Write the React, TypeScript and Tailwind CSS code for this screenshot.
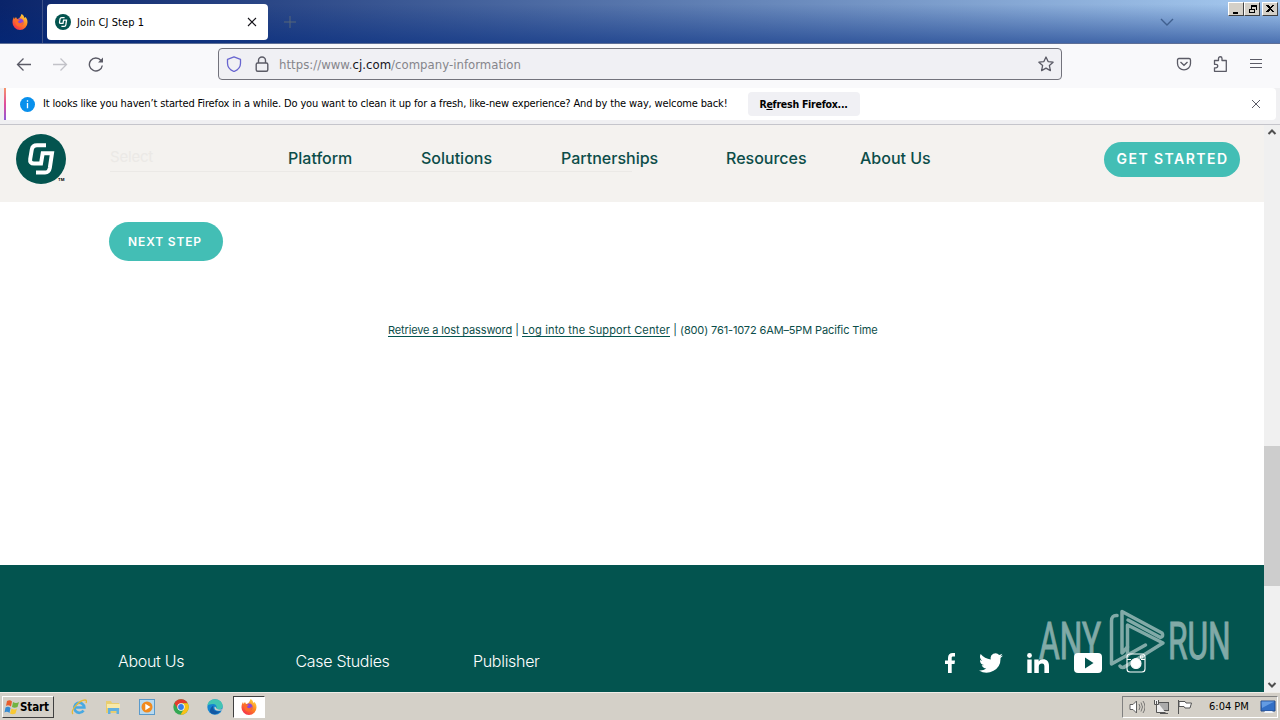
import { ReactNode } from 'react'
import clsx from 'clsx'

const navItems = [
  { label: 'Platform', width: 'w-[133px]' },
  { label: 'Solutions', width: 'w-[140px]' },
  { label: 'Partnerships', width: 'w-[165px]' },
  { label: 'Resources', width: 'w-[134px]' },
  { label: 'About Us', width: 'w-[80px]' },
]

const footerLinks = ['About Us', 'Case Studies', 'Publisher']

function CjLogo({ className }: { className?: string }) {
  return (
    <svg viewBox="0 0 50 50" className={className}>
      <circle cx="25" cy="25" r="25" fill="#03544f" />
      <path
        d="M30 11.200H21Q16.500 11.200 15.800 15.500L14.200 25Q13.500 29.500 18 29.500H25L26.700 19.300H36L33.800 34Q33 38.500 29 38.500H20"
        fill="none"
        stroke="#fff"
        strokeWidth="4"
      />
    </svg>
  )
}

function FirefoxIcon({ className }: { className?: string }) {
  return (
    <svg viewBox="0 0 16 16" className={className}>
      <defs>
        <linearGradient id="fox" x1="0.9" y1="0" x2="0.2" y2="1">
          <stop offset="0" stopColor="#ffe14a" />
          <stop offset="0.45" stopColor="#ff8a1f" />
          <stop offset="1" stopColor="#f5284f" />
        </linearGradient>
      </defs>
      <path d="M2 3l.5 2L4 3l1 2 2-.5C8 3 9 2 9.500 0c2 1 2.500 2.500 3 4l1-1c1.500 1.500 2 3 2 5.500A7.500 7.500 0 0 1 .5 8.500C.5 6 1 5 2 3z" fill="url(#fox)" />
      <circle cx="8" cy="8" r="3.500" fill="#8b45d8" />
      <path d="M3 6c2-1.500 3.500-.5 5 0L6 7.500c.5 2.500 3.500 2 5 0 .5 3-1.500 5-4 5S3 9 3 6z" fill="#ff6a2a" />
    </svg>
  )
}

function TitleBar() {
  return (
    <div className="relative flex h-11 items-start border-b border-[#5e6f96] bg-[linear-gradient(to_right,#0a246a,#a6caf0)]">
      <div className="pointer-events-none absolute inset-0 bg-[linear-gradient(to_bottom,transparent_10%,rgba(0,40,125,0.55))]" />
      <div className="relative flex h-[43px] w-[43px] items-center justify-center border-r border-[#3e5288] pr-[2px]">
        <FirefoxIcon className="size-4" />
      </div>
      <div className="relative mt-1 ml-1 flex h-9 w-[221px] items-center rounded bg-white pl-2 pr-[10px]">
        <CjLogo className="size-4" />
        <span className="ml-[6px] pt-[2px] text-[11px] tracking-[0.08px]">Join CJ Step 1</span>
        <svg viewBox="0 0 12 12" className="ml-auto size-3" stroke="#15141a" strokeWidth="1.1">
          <path d="M2 2l8 8M10 2l-8 8" />
        </svg>
      </div>
      <svg viewBox="0 0 12 12" className="relative mt-4 ml-4 size-3" stroke="#566678">
        <path d="M6 0v12M0 6h12" />
      </svg>
      <svg viewBox="0 0 14 10" className="relative mt-[17px] ml-auto h-[10px] w-[14px]" fill="none" stroke="#40608f" strokeWidth="1.400">
        <path d="M1 2l6 6 6-6" />
      </svg>
      <div className="relative mt-[2px] mr-[2px] ml-[54px] flex">
        {['M4 9h5v2H4z', 'M6 2h6v5h-2v3H4V6h2zM7 4v2h3v1h1V4zM5 7v2h4V7z', 'M3 2h2l2 2 2-2h2L8 5.500 11 9H9L7 7l-2 2H3l3-3.500z'].map((d, i) => (
          <div
            key={d}
            className={clsx(
              'h-[14px] w-4 border border-t-white border-r-[#404040] border-b-[#404040] border-l-white bg-[#d4d0c8]',
              i === 2 && 'ml-[2px]',
            )}
          >
            <svg viewBox="0 0 14 12" className="h-3 w-[14px]" shapeRendering="crispEdges">
              <path d={d} fillRule="evenodd" />
            </svg>
          </div>
        ))}
      </div>
    </div>
  )
}

function Toolbar() {
  return (
    <div className="flex h-11 items-start bg-[#f9f9fb] pt-1 pl-4">
      <div className="flex h-8 w-[202px] items-center gap-5">
        <svg viewBox="0 0 16 16" className="size-4" fill="none" stroke="#5b5b66" strokeWidth="1.300">
          <path d="M15 8.500H1.500M7.500 2.500l-6 6 6 6" />
        </svg>
        <svg viewBox="0 0 16 16" className="size-4" fill="none" stroke="#c2c2c8" strokeWidth="1.300">
          <path d="M1 8.500h13.500M8.500 2.500l6 6-6 6" />
        </svg>
        <svg viewBox="0 0 16 16" className="size-4" fill="none" stroke="#5b5b66" strokeWidth="1.400">
          <path d="M14.300 9.500A6.500 6.500 0 1 1 13 4.500" />
          <path d="M15 1.500v5h-5z" fill="#5b5b66" stroke="none" />
        </svg>
      </div>
      <div className="flex h-8 w-[844px] items-center rounded border border-[#73737c] bg-[#f0f0f4] px-[7px]">
        <svg viewBox="0 0 16 16" className="size-4" fill="none" stroke="#6865d0" strokeWidth="1.300">
          <path d="M8 .8l6.500 2.500v4C14.500 11 12 14 8 15.500 4 14 1.500 11 1.500 7.300v-4z" strokeLinejoin="round" />
        </svg>
        <svg viewBox="0 0 16 16" className="ml-3 size-4" fill="none" stroke="#5b5b66" strokeWidth="1.400">
          <rect x="2.200" y="7" width="11.600" height="8.200" rx="1.500" />
          <path d="M4.500 7V4.500a3.500 3.500 0 0 1 7 0V7" />
        </svg>
        <span className="ml-[9px] pt-[2px] text-[13px] tracking-[0.03px] text-[#85858b]">
          https://www.<span className="text-[#15141a]">cj.com</span>/company-information
        </span>
        <svg viewBox="0 0 16 16" className="ml-auto size-4" fill="none" stroke="#5b5b66" strokeWidth="1.300" strokeLinejoin="round">
          <path d="M8 1l2.100 4.600 5 .6-3.700 3.400 1 5L8 12.100l-4.400 2.500 1-5L.9 6.200l5-.6z" />
        </svg>
      </div>
      <div className="ml-[114px] flex h-8 items-center gap-5">
        <svg viewBox="0 0 16 16" className="size-4" fill="none" stroke="#5b5b66" strokeWidth="1.300">
          <path d="M3 2.500h10q1.500 0 1.500 1.500v3.500a6.500 6.300 0 0 1-13 0V4q0-1.500 1.500-1.500z" />
          <path d="M4.500 6L8 9.300 11.500 6" />
        </svg>
        <svg viewBox="0 0 16 16" className="size-4" fill="none" stroke="#5b5b66" strokeWidth="1.300" strokeLinejoin="round">
          <path d="M2.500 4.500h4V2.500a1.700 1.700 0 0 1 3.500 0v2h4.300V15.300H2.500v-3.500h1.500a1.700 1.700 0 0 0 0-3.500H2.500z" />
        </svg>
        <svg viewBox="0 0 16 16" className="size-4" stroke="#5b5b66" strokeWidth="1.200">
          <path d="M2 3.500h12M2 7.500h12M2 11.500h12" />
        </svg>
      </div>
    </div>
  )
}

function Notification() {
  return (
    <div className="h-[37px] border-b border-[#c5c5cb] bg-[#f0f0f2] pr-1 pl-1">
      <div className="flex h-8 items-center rounded-sm bg-white pr-[14px]">
        <div className="h-8 w-[2px] bg-[linear-gradient(to_bottom,#f6956a,#e04c9b,#9059d8)]" />
        <svg viewBox="0 0 16 16" className="ml-[14px] size-[15px]">
          <circle cx="8" cy="8" r="8" fill="#0990ec" />
          <path d="M7.300 3.500h1.400V5H7.300zM7.300 6.500h1.400V12H7.300z" fill="#fff" />
        </svg>
        <span className="ml-2 w-[705px] whitespace-nowrap text-[11px] tracking-[-0.145px]">
          It looks like you haven’t started Firefox in a while. Do you want to clean it up for a fresh, like-new experience? And by the way, welcome back!
        </span>
        <button className="h-6 w-28 rounded bg-[#f0f0f4] pt-px pr-px text-[10.500px] font-bold tracking-[-0.25px] whitespace-nowrap">
          R<span className="underline">e</span>fresh Firefox...
        </button>
        <svg viewBox="0 0 12 12" className="ml-auto size-3" stroke="#5b5b66">
          <path d="M2 2l8 8M10 2l-8 8" />
        </svg>
      </div>
    </div>
  )
}

function Header() {
  return (
    <header className="relative flex h-[77px] items-start bg-[#f4f2ef] font-[Inter]">
      <div className="absolute top-[21px] left-[110px] w-[522px] border-b border-[#ebe9e6] pb-[3px] text-[15px] leading-[22px] tracking-[-0.2px] text-[#ebe9e6]">
        Select
      </div>
      <div className="relative mt-[9px] ml-4 w-[272px]">
        <CjLogo className="size-[50px]" />
        <span className="absolute top-[43px] left-[42px] text-[4px] leading-[6px] font-bold">TM</span>
      </div>
      <nav className="relative flex pt-[21px] text-base font-medium text-[#0c4d49]">
        {navItems.map(item => (
          <a key={item.label} className={clsx('whitespace-nowrap', item.width)}>{item.label}</a>
        ))}
      </nav>
      <button className="mt-[17px] mr-6 ml-auto h-[35px] w-[136px] rounded-full bg-[#43beb5] pb-[2px] pl-px text-[14px] font-semibold tracking-[1.450px] whitespace-nowrap text-white">
        GET STARTED
      </button>
    </header>
  )
}

function SocialIcons() {
  return (
    <div className="flex h-5 items-center text-white">
      <svg viewBox="0 0 10 20" className="h-5 w-[10px]" fill="currentColor">
        <path d="M3 20V11H0V7.500h3V5c0-3.300 1.800-5 4.800-5H10v3.500H8.200C7 3.500 6.700 4 6.700 5v2.500H10L9.500 11H6.700v9z" />
      </svg>
      <svg viewBox="0 2 24 20" className="ml-6 h-5 w-6" fill="currentColor">
        <path d="M24 4.600a10 10 0 0 1-2.800.8 5 5 0 0 0 2.100-2.700 10 10 0 0 1-3.100 1.200 4.900 4.900 0 0 0-8.400 4.500A14 14 0 0 1 1.700 3.100a4.900 4.900 0 0 0 1.500 6.600 5 5 0 0 1-2.200-.6 4.900 4.900 0 0 0 3.900 4.900 5 5 0 0 1-2.200.1 4.900 4.900 0 0 0 4.600 3.400A10 10 0 0 1 0 19.500 14 14 0 0 0 21.500 7a10 10 0 0 0 2.500-2.400z" />
      </svg>
      <svg viewBox="0 0 22 20" className="ml-6 h-5 w-[22px]" fill="currentColor">
        <circle cx="2.500" cy="2.500" r="2.400" />
        <path d="M.3 6.500h4.400V20H.3zM7.300 6.500h4.400v2c1-1.500 2.300-2.300 4.300-2.300 4 0 6 2.500 6 6.800v7h-4.600v-6.500c0-2-.6-3-2.400-3-2 0-3.200 1-3.200 3.200V20H7.300z" />
      </svg>
      <svg viewBox="0 0 28 20" className="ml-[25px] h-5 w-7">
        <rect width="28" height="20" rx="4" fill="#fff" />
        <path d="M11 4.500v11l8.500-5.500z" fill="#03544f" />
      </svg>
      <svg viewBox="0 0 20 20" className="ml-6 size-5" fill="none" stroke="#fff" strokeWidth="1.100">
        <rect x="1" y="1" width="18" height="18" rx="3" />
        <path d="M1 6.500h4M15 6.500h4" />
        <circle cx="10" cy="10.500" r="5" fill="#fff" />
        <rect x="14.500" y="3" width="2.500" height="2" />
      </svg>
    </div>
  )
}

function Watermark() {
  return (
    <svg viewBox="0 0 200 70" className="absolute right-[28px] bottom-[20px] h-[70px] w-[200px] opacity-50" fill="#fff">
      <g fontFamily="Roboto" fontSize="52" stroke="#fff" strokeWidth="1">
        <text transform="translate(3 57) scale(.61 1)">ANY</text>
        <text transform="translate(132 57) scale(.61 1)">RUN</text>
      </g>
      <g fill="none" stroke="#fff" strokeWidth="3.500" strokeLinejoin="round" strokeLinecap="round">
        <path d="M81 13.500Q75.500 13 75.500 19V62l34-19" />
        <path d="M91.500 45L86 51V9.500L126 31Q128 34 124.500 35.500L92 18" />
        <path d="M91.500 54V23L127 41 90 64Q86 67 84 64" />
      </g>
    </svg>
  )
}

function Page() {
  return (
    <div className="flex h-[567px]">
      <main className="relative flex w-[1264px] flex-col overflow-hidden bg-white font-[Inter]">
        <Header />
        <div className="flex h-[363px] flex-col items-start pt-[20px]">
          <button className="ml-[109px] h-[39px] w-[114px] rounded-full bg-[#43beb5] pr-[2px] text-[12px] font-semibold tracking-[0.85px] whitespace-nowrap text-white">
            NEXT STEP
          </button>
          <p className="mt-[61px] ml-[388px] flex text-[11px] leading-4 whitespace-nowrap text-[#0c4d49]">
            <a className="h-[15px] w-[124px] border-b border-[#03544f] tracking-[-0.14px]">Retrieve a lost password</a>
            <span className="w-[10px] text-center">|</span>
            <a className="h-[15px] w-[148px] border-b border-[#03544f] tracking-[0.14px]">Log into the Support Center</a>
            <span className="w-[10px] text-center">|</span>
            <span className="tracking-[-0.13px]">(800) 761-1072 6AM–5PM Pacific Time</span>
          </p>
        </div>
        <footer className="flex h-[127px] items-start bg-[#03544f] pt-[84px] pr-[118px] pl-[118px] text-white">
          {footerLinks.map(link => (
            <a key={link} className="w-[177.500px] text-base font-light tracking-[-0.3px] whitespace-nowrap">{link}</a>
          ))}
          <div className="mt-1 ml-auto">
            <SocialIcons />
          </div>
        </footer>
        <Watermark />
      </main>
      <div className="flex w-4 flex-col items-center bg-[#f0f0f0]">
        <svg viewBox="0 0 16 14" className="h-[14px] w-4" fill="none" stroke="#505050" strokeWidth="2">
          <path d="M4.500 9L8 5.500 11.500 9" />
        </svg>
        <div className="mt-[307px] h-[140px] w-4 bg-[#cdcdcd]" />
        <svg viewBox="0 0 16 14" className="mt-auto h-[14px] w-4" fill="none" stroke="#505050" strokeWidth="2">
          <path d="M4.500 5L8 8.500 11.500 5" />
        </svg>
      </div>
    </div>
  )
}

function TaskIcon({ active, children }: { active?: boolean; children: ReactNode }) {
  return (
    <div
      className={clsx(
        'mr-[2px] flex h-[22px] w-8 items-center justify-center',
        active && 'border border-t-[#404040] border-r-white border-b-white border-l-[#404040] bg-white',
      )}
    >
      {children}
    </div>
  )
}

function Taskbar() {
  return (
    <div className="flex h-7 items-start border-t border-[#efede8] bg-[#d4d0c8] pt-[3px] pr-[2px] pl-[2px]">
      <button className="mr-[9px] flex h-[22px] w-[52px] items-center border border-t-white border-r-[#404040] border-b-[#404040] border-l-white pl-px text-[11.500px] font-bold">
        <svg viewBox="0 0 16 16" className="size-4 shrink-0">
          <path d="M3 2q3-1.500 5 .5L7 7.500q-3-2-5-.5z" fill="#e85d2b" />
          <path d="M9 3q3 2 6 0l-1.500 5q-3 1.500-5.500 0z" fill="#71b340" />
          <path d="M1.500 8.500q3-1.500 5 .5L5.500 14Q3 12 .5 13.500z" fill="#368bd2" />
          <path d="M7.500 9.500q3 2 5.500 0l-1.500 5q-3 1.500-5.500 0z" fill="#f8c833" />
        </svg>
        <span className="pt-px tracking-[-0.1px]">Start</span>
      </button>
      <TaskIcon>
        <svg viewBox="0 0 16 16" className="size-4" fill="none">
          <path d="M12.500 11.500a5 5 0 1 1 .8-3H4" stroke="#48a9e2" strokeWidth="2.700" />
          <path d="M2 15C-1 12 8 1 14 1c2 0 1.500 2 1 3" stroke="#e7b936" strokeWidth="1.300" />
        </svg>
      </TaskIcon>
      <TaskIcon>
        <svg viewBox="0 0 16 16" className="size-4">
          <path d="M1 2h5l1 2h7v10H1z" fill="#e8cd70" />
          <path d="M2 5h13v4H2z" fill="#f8e9a8" />
          <path d="M3 15V9h11v6h-2.500v-3h-6v3z" fill="#62b0df" />
        </svg>
      </TaskIcon>
      <TaskIcon>
        <svg viewBox="0 0 16 16" className="size-4">
          <rect x=".5" y=".5" width="15" height="15" fill="#b8d9ef" stroke="#5a9acb" />
          <circle cx="8" cy="8" r="5.500" fill="#f18a1d" />
          <path d="M6.300 4.700v6.600L11.500 8z" fill="#fff" />
        </svg>
      </TaskIcon>
      <TaskIcon>
        <svg viewBox="0 0 16 16" className="size-4">
          <circle cx="8" cy="8" r="7.700" fill="#34a853" />
          <path d="M1.300 4.200A7.700 7.700 0 0 1 14.700 4.200H8L5 10z" fill="#e33b2e" />
          <path d="M14.700 4.200A7.700 7.700 0 0 1 7.500 15.700L11.500 9 9 4.200z" fill="#fbc116" />
          <circle cx="8" cy="8" r="3.700" fill="#fff" />
          <circle cx="8" cy="8" r="2.900" fill="#347ee8" />
        </svg>
      </TaskIcon>
      <TaskIcon>
        <svg viewBox="0 0 16 16" className="size-4">
          <circle cx="8" cy="8" r="7.700" fill="#1686d1" />
          <path d="M.5 6.500C1 2 5 .3 8 .3c4.500 0 7.700 3.200 7.700 6.700 0 2.500-2 3.500-4 3.500S9 9.500 9.500 8.500 9 5 6 5 1.500 6 .5 6.500z" fill="#42c5b3" />
          <path d="M6.500 6.500c-1.500 4 2 7 7 5.500-2 3-6 4-9 2.500S3.500 8 6.500 6.500z" fill="#1258a3" />
          <path d="M7.500 8c-.5 2.500 2 4.500 6 3.500h2V10c-2 1-5 .5-6-.5S9 7 7.500 8z" fill="#d4d0c8" />
        </svg>
      </TaskIcon>
      <TaskIcon active>
        <FirefoxIcon className="size-4" />
      </TaskIcon>
      <div className="ml-auto flex h-[22px] w-[156px] items-center border border-t-[#808080] border-r-white border-b-white border-l-[#808080] pl-[6px]">
        <svg viewBox="0 0 16 16" className="size-4" fill="#fff" stroke="#606060">
          <path d="M1 5.500h3L7.500 2v12L4 10.500H1z" />
          <path d="M10 5q2 3 0 6M12 3.500q3 4.500 0 9M14 2q4 6 0 12" fill="none" strokeWidth=".8" />
        </svg>
        <svg viewBox="0 0 16 16" className="ml-2 size-4" fill="#eee" stroke="#555">
          <rect x="5.500" y="3.500" width="10" height="8" fill="#aaa" />
          <path d="M1.500 1v4.500h4V1M3.500 2v11.500h9M7 14.500h8" />
        </svg>
        <svg viewBox="0 0 16 16" className="ml-2 size-4" fill="#fff" stroke="#555">
          <path d="M1.500 1v14M2 2.500h6l1 1.500h5.500L13 9H8L7 7.500H2z" />
        </svg>
        <span className="ml-4 w-[40px] whitespace-nowrap text-[11px]">6:04 PM</span>
        <svg viewBox="0 0 16 16" className="ml-[11px] size-4">
          <path d="M1 2h14v10H1z" fill="#326fc6" stroke="#244a89" />
          <path d="M1.500 2.500h13L2 9z" fill="#639be3" />
          <path d="M5 12h7l2 2H4z" fill="#eef2f8" />
        </svg>
      </div>
    </div>
  )
}

export default function App() {
  return (
    <div className="h-[720px] w-[1280px] overflow-hidden bg-white font-['DejaVu_Sans_Condensed','DejaVu_Sans',sans-serif] text-black">
      <TitleBar />
      <Toolbar />
      <Notification />
      <Page />
      <Taskbar />
    </div>
  )
}
